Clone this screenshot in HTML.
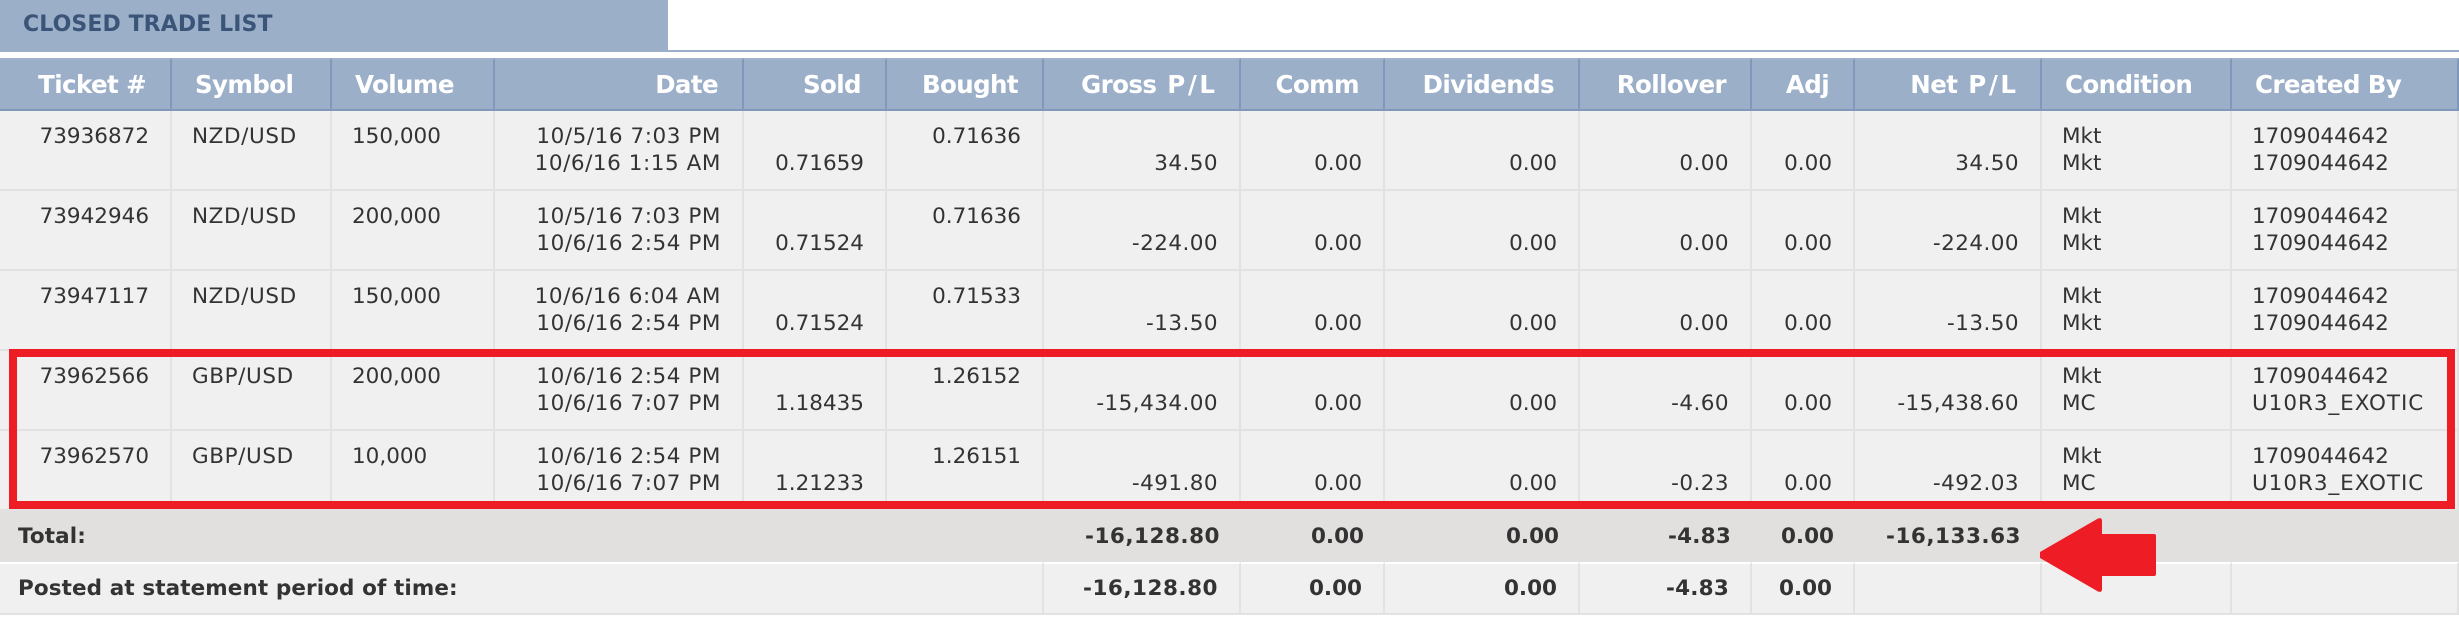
<!DOCTYPE html>
<html><head><meta charset="utf-8"><style>
html,body{margin:0;padding:0;background:#fff;width:2459px;height:622px;overflow:hidden}
body{position:relative;font-family:"DejaVu Sans","Liberation Sans",sans-serif;color:#333}
#line{position:absolute;left:0;top:50px;width:2459px;height:2px;background:#9cafc9}
#title{position:absolute;left:0;top:0;width:668px;height:52px;background:#9cafc9;color:#3b5578;font-weight:bold;font-size:22px;line-height:50px;box-sizing:border-box;padding-left:23px;letter-spacing:.1px;white-space:nowrap}
table{position:absolute;left:0;top:58px;width:2459px;border-collapse:separate;border-spacing:0;table-layout:fixed}
td,th{box-sizing:border-box;padding:0;vertical-align:top;white-space:nowrap}
th{height:53px;background:#9cafc9;color:#fff;font-size:24.5px;line-height:48px;padding-top:1px;letter-spacing:-.6px;font-weight:bold;border-right:2px solid #8099ba;border-bottom:2px solid #8099ba;border-top:2px solid #a0b3cc;text-align:right;padding-right:24px}
th.l{text-align:left;padding-left:23px;padding-right:0}
th span{letter-spacing:2.6px;margin-right:-2.6px;margin-left:3px}
td{height:80px;background:#f0f0f0;font-size:21.5px;line-height:27px;padding-top:12px;border-right:2px solid #e2e2e2;border-bottom:2px solid #e2e2e2;text-align:right;padding-right:21px}
td.l{text-align:left;padding-right:0;padding-left:20px}
td.s{letter-spacing:.6px}
td.d{letter-spacing:.55px}
td span{letter-spacing:.95px}
td:nth-child(7),td:nth-child(10),td:nth-child(12){letter-spacing:.45px}
tr.t td,tr.p td{letter-spacing:0}
tr.t td{height:51px;background:#e1e0de;border:0;font-weight:bold;padding-right:21px}
tr.t td:first-child,tr.p td:first-child{text-align:left;padding-left:18px;padding-right:0;letter-spacing:.1px}
tr.p td{height:53px;border-top:2px solid #fff;padding-top:11px;font-weight:bold}
tr.t td:nth-child(2),tr.p td:nth-child(2),tr.t td:nth-child(7){letter-spacing:.5px}
tr.t td:nth-child(5),tr.p td:nth-child(5){letter-spacing:.2px}
#box{position:absolute;left:9px;top:349px;width:2446px;height:160px;box-sizing:border-box;border:8px solid #ee1c25}
svg{position:absolute;left:0;top:0}
</style></head><body>
<div id="title">CLOSED TRADE LIST</div><div id="line"></div>
<table>
<colgroup><col style="width:172px"><col style="width:160px"><col style="width:163px"><col style="width:249px"><col style="width:143px"><col style="width:157px"><col style="width:197px"><col style="width:144px"><col style="width:195px"><col style="width:172px"><col style="width:103px"><col style="width:187px"><col style="width:190px"><col style="width:227px"></colgroup>
<tr><th>Ticket #</th><th class="l">Symbol</th><th class="l">Volume</th><th>Date</th><th>Sold</th><th>Bought</th><th>Gross <span>P/L</span></th><th>Comm</th><th>Dividends</th><th>Rollover</th><th>Adj</th><th>Net <span>P/L</span></th><th class="l">Condition</th><th class="l">Created By</th></tr>
<tr><td>73936872</td><td class="l s">NZD/USD</td><td class="l">150,000</td><td class="d">10/5/16 7:03 PM<br>10/6/16 1:15 AM</td><td>&nbsp;<br>0.71659</td><td>0.71636</td><td>&nbsp;<br>34.50</td><td>&nbsp;<br>0.00</td><td>&nbsp;<br>0.00</td><td>&nbsp;<br>0.00</td><td>&nbsp;<br>0.00</td><td>&nbsp;<br>34.50</td><td class="l">Mkt<br>Mkt</td><td class="l">1709044642<br>1709044642</td></tr>
<tr><td>73942946</td><td class="l s">NZD/USD</td><td class="l">200,000</td><td class="d">10/5/16 7:03 PM<br>10/6/16 2:54 PM</td><td>&nbsp;<br>0.71524</td><td>0.71636</td><td>&nbsp;<br>-224.00</td><td>&nbsp;<br>0.00</td><td>&nbsp;<br>0.00</td><td>&nbsp;<br>0.00</td><td>&nbsp;<br>0.00</td><td>&nbsp;<br>-224.00</td><td class="l">Mkt<br>Mkt</td><td class="l">1709044642<br>1709044642</td></tr>
<tr><td>73947117</td><td class="l s">NZD/USD</td><td class="l">150,000</td><td class="d">10/6/16 6:04 AM<br>10/6/16 2:54 PM</td><td>&nbsp;<br>0.71524</td><td>0.71533</td><td>&nbsp;<br>-13.50</td><td>&nbsp;<br>0.00</td><td>&nbsp;<br>0.00</td><td>&nbsp;<br>0.00</td><td>&nbsp;<br>0.00</td><td>&nbsp;<br>-13.50</td><td class="l">Mkt<br>Mkt</td><td class="l">1709044642<br>1709044642</td></tr>
<tr><td>73962566</td><td class="l s">GBP/USD</td><td class="l">200,000</td><td class="d">10/6/16 2:54 PM<br>10/6/16 7:07 PM</td><td>&nbsp;<br>1.18435</td><td>1.26152</td><td>&nbsp;<br>-15,434.00</td><td>&nbsp;<br>0.00</td><td>&nbsp;<br>0.00</td><td>&nbsp;<br>-4.60</td><td>&nbsp;<br>0.00</td><td>&nbsp;<br>-15,438.60</td><td class="l">Mkt<br>MC</td><td class="l">1709044642<br><span>U10R3_EXOTIC</span></td></tr>
<tr><td>73962570</td><td class="l s">GBP/USD</td><td class="l">10,000</td><td class="d">10/6/16 2:54 PM<br>10/6/16 7:07 PM</td><td>&nbsp;<br>1.21233</td><td>1.26151</td><td>&nbsp;<br>-491.80</td><td>&nbsp;<br>0.00</td><td>&nbsp;<br>0.00</td><td>&nbsp;<br>-0.23</td><td>&nbsp;<br>0.00</td><td>&nbsp;<br>-492.03</td><td class="l">Mkt<br>MC</td><td class="l">1709044642<br><span>U10R3_EXOTIC</span></td></tr>
<tr class="t"><td colspan="6">Total:</td><td>-16,128.80</td><td>0.00</td><td>0.00</td><td>-4.83</td><td>0.00</td><td>-16,133.63</td><td></td><td></td></tr>
<tr class="p"><td colspan="6">Posted at statement period of time:</td><td>-16,128.80</td><td>0.00</td><td>0.00</td><td>-4.83</td><td>0.00</td><td></td><td></td><td></td></tr>
</table>
<div id="box"></div>
<svg width="2459" height="622"><path d="M2040 552 L2098 518.5 Q2102 517 2102 521 V534 H2154 Q2156 534 2156 536 V574 Q2156 576 2154 576 H2102 V589 Q2102 593 2098 591.5 L2040 558 Z" fill="#ee1c25"/></svg>
</body></html>
